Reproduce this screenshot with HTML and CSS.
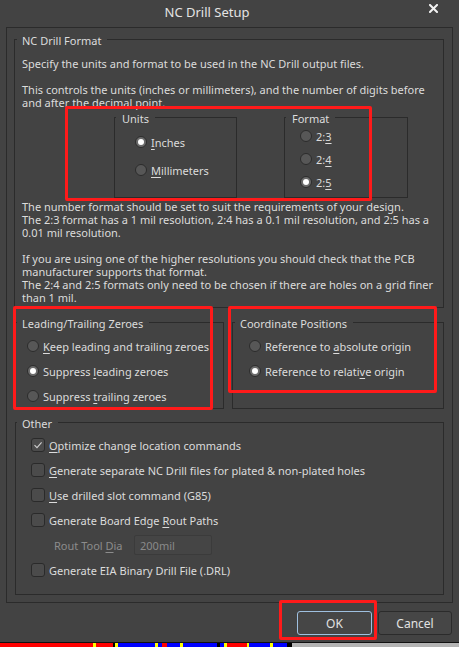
FILE: index.html
```html
<!DOCTYPE html>
<html lang="en">
<head>
<meta charset="utf-8">
<title>NC Drill Setup</title>
<link rel="stylesheet" href="styles.css">
</head>
<body>
<div class="dialog">
  <div class="titlebar">
    <span class="title">NC Drill Setup</span>
    <span class="close"><svg width="9" height="9" viewBox="0 0 9 9"><path d="M1 1L8 8M8 1L1 8" stroke="#f2f2f2" stroke-width="2" stroke-linecap="square"/></svg></span>
  </div>

  <div class="outer">
    <fieldset class="group nc">
      <legend>NC Drill Format</legend>
      <p class="txt first">Specify the units and format to be used in the NC Drill output files.</p>
      <p class="txt gap">This controls the units (inches or millimeters), and the number of digits before<br>and after the decimal point.</p>
      <div class="uf-row">
        <fieldset class="group sub units">
          <legend>Units</legend>
          <div class="opts units-opts">
            <label class="opt"><span class="radio on"></span><span><u>I</u>nches</span></label>
            <label class="opt"><span class="radio"></span><span><u>M</u>illimeters</span></label>
          </div>
        </fieldset>
        <fieldset class="group sub format">
          <legend>Format</legend>
          <div class="opts format-opts">
            <label class="opt"><span class="radio"></span><span>2:<u>3</u></span></label>
            <label class="opt"><span class="radio"></span><span>2:<u>4</u></span></label>
            <label class="opt"><span class="radio on"></span><span>2:<u>5</u></span></label>
          </div>
        </fieldset>
      </div>
      <p class="txt after">The number format should be set to suit the requirements of your design.<br>The 2:3 format has a 1 mil resolution, 2:4 has a 0.1 mil resolution, and 2:5 has a<br>0.01 mil resolution.</p>
      <p class="txt gap last">If you are using one of the higher resolutions you should check that the PCB<br>manufacturer supports that format.<br>The 2:4 and 2:5 formats only need to be chosen if there are holes on a grid finer<br>than 1 mil.</p>
    </fieldset>

    <div class="pair">
      <fieldset class="group zeroes">
        <legend>Leading/Trailing Zeroes</legend>
        <div class="opts z-opts">
          <label class="opt"><span class="radio"></span><span><u>K</u>eep leading and trailing zeroes</span></label>
          <label class="opt"><span class="radio on"></span><span>Suppress <u>l</u>eading zeroes</span></label>
          <label class="opt"><span class="radio"></span><span>Suppress <u>t</u>railing zeroes</span></label>
        </div>
      </fieldset>
      <fieldset class="group coords">
        <legend>Coordinate Positions</legend>
        <div class="opts c-opts">
          <label class="opt"><span class="radio"></span><span>Reference to <u>a</u>bsolute origin</span></label>
          <label class="opt"><span class="radio on"></span><span>Reference to relati<u>v</u>e origin</span></label>
        </div>
      </fieldset>
    </div>

    <fieldset class="group other">
      <legend>Other</legend>
      <div class="opts o-opts">
        <label class="opt"><span class="check on"><svg width="12" height="12" viewBox="0 0 12 12"><path d="M2.5 6.2L5 8.6L9.6 3.4" fill="none" stroke="#cfcfcf" stroke-width="1.1"/></svg></span><span><u>O</u>ptimize change location commands</span></label>
        <label class="opt"><span class="check"></span><span><u>G</u>enerate separate NC Drill files for plated &amp; non-plated holes</span></label>
        <label class="opt"><span class="check"></span><span><u>U</u>se drilled slot command (G85)</span></label>
        <label class="opt"><span class="check"></span><span>Generate Board Edge <u>R</u>out Paths</span></label>
        <div class="opt rout"><span class="rout-label">Rout Tool <u>D</u>ia</span><span class="input">200mil</span></div>
        <label class="opt"><span class="check"></span><span>Generate EIA Binary Drill File (.DRL)</span></label>
      </div>
    </fieldset>
  </div>

  <div class="buttons">
    <button class="btn default">OK</button>
    <button class="btn">Cancel</button>
  </div>
</div>

<div class="strip">
  <span class="s r" style="width:93px"></span>
  <span class="s y" style="width:3px"></span>
  <span class="s r" style="width:17px"></span>
  <span class="s k" style="width:2px"></span>
  <span class="s y" style="width:3px"></span>
  <span class="s b" style="width:37px"></span>
  <span class="s y" style="width:3px"></span>
  <span class="s b" style="width:4px"></span>
  <span class="s r" style="width:5px"></span>
  <span class="s b" style="width:13px"></span>
  <span class="s y" style="width:3px"></span>
  <span class="s b" style="width:34px"></span>
  <span class="s k" style="width:3px"></span>
  <span class="s b" style="width:4px"></span>
  <span class="s y" style="width:3px"></span>
  <span class="s r" style="width:20px"></span>
  <span class="s y" style="width:2px"></span>
  <span class="s b" style="width:21px"></span>
  <span class="s y" style="width:3px"></span>
  <span class="s b" style="width:14px"></span>
  <span class="s k" style="width:5px"></span>
  <span class="s g" style="width:167px"></span>
</div>

<div class="mark m1"></div>
<div class="mark m2"></div>
<div class="mark m3"></div>
<div class="mark m4"></div>
</body>
</html>
```
FILE: styles.css
```css
* { box-sizing: border-box; }

html, body {
  margin: 0;
  padding: 0;
}

body {
  width: 459px;
  height: 647px;
  overflow: hidden;
  position: relative;
  background: #434343;
  color: #dcdcdc;
  font-family: "Noto Sans", "DejaVu Sans", sans-serif;
  font-size: 11px;
  line-height: 13px;
}

.dialog {
  height: 642px;
  display: flex;
  flex-direction: column;
}

/* title bar */
.titlebar {
  height: 27px;
  display: flex;
  align-items: flex-start;
}
.title {
  flex: 1;
  text-align: center;
  padding-top: 3px;
  font-size: 13px;
  line-height: 18px;
  color: #e4e4e4;
}
.close {
  width: 45px;
  padding: 4px 6px 0 0;
  display: flex;
  justify-content: center;
}
.close svg { display: block; }

/* group boxes */
.outer {
  margin: 0 6px 0 6px;
  border: 1px solid #2b2b2b;
  padding: 3px 8px 7px 7px;
}

.group {
  margin: 0;
  border: 1px solid #2b2b2b;
  padding: 0;
  min-width: 0;
}
.group > legend {
  margin-left: 1px;
  padding: 3px 6px 0 5px;
  line-height: 14px;
  color: #dcdcdc;
}

.nc {
  padding: 0 7px 3px 7px;
}
.nc > legend {
  margin-left: -5px;
}

.txt {
  margin: 0;
  white-space: nowrap;
}
.txt.first { margin-top: 9px; }
.txt.gap { margin-top: 13px; }
.txt.after { margin-top: 2px; }

.uf-row {
  display: flex;
  gap: 47px;
  margin-left: 92px;
  height: 89px;
}
.sub > legend {
  margin-left: 1px;
  padding: 3px 6px 0 6px;
}
.units { width: 123px; }
.format { width: 124px; }

.opts {
  display: flex;
  flex-direction: column;
}
.opt {
  display: flex;
  align-items: center;
  gap: 4px;
  height: 20px;
  white-space: nowrap;
}

.units-opts { padding: 6px 0 0 20px; gap: 8px; }
.format-opts { padding: 0 0 0 15px; gap: 3px; }

.pair {
  display: flex;
  gap: 8px;
  margin: 6px 0 0 1px;
  height: 95px;
}
.zeroes { width: 209px; }
.coords { width: 212px; }
.coords > legend { margin-left: 2px; }
.z-opts { padding: 5px 0 0 11px; gap: 5px; }
.c-opts { padding: 5px 0 0 16px; gap: 5px; }

.other {
  margin: 5px 0 0 1px;
  width: 429px;
  padding-bottom: 14px;
}
.o-opts { padding: 4px 0 0 15px; gap: 5px; }

/* radio */
.radio {
  width: 12px;
  height: 12px;
  border-radius: 50%;
  background: #575757;
  border: 1px solid #2c2c2c;
  flex: none;
  display: flex;
  align-items: center;
  justify-content: center;
}
.radio.on {
  background: #6a6a6a;
}
.radio.on::after {
  content: "";
  width: 6px;
  height: 6px;
  border-radius: 50%;
  background: #ffffff;
}

/* checkbox */
.check {
  width: 14px;
  height: 14px;
  border-radius: 3px;
  background: #4b4b4b;
  border: 1px solid #2a2a2a;
  flex: none;
  display: flex;
  align-items: center;
  justify-content: center;
}
.check svg { display: block; }

u {
  text-decoration: underline;
  text-decoration-thickness: 1px;
  text-underline-offset: 2px;
}

.rout {
  padding-left: 23px;
  gap: 0;
  color: #8c8c8c;
}
.rout-label {
  width: 80px;
}
.input {
  width: 78px;
  height: 20px;
  border: 1px solid #3b3b3b;
  border-radius: 2px;
  background: #454545;
  padding-left: 5px;
  display: flex;
  align-items: center;
  color: #8a8a8a;
}

/* buttons */
.buttons {
  margin-top: 8px;
  padding-right: 7px;
  display: flex;
  justify-content: flex-end;
  gap: 6px;
}
.btn {
  width: 74px;
  height: 24px;
  margin: 0;
  padding: 0;
  font-family: "Noto Sans", "DejaVu Sans", sans-serif;
  font-size: 12px;
  color: #e2e2e2;
  background: #464646;
  border: 1px solid #2b2b2b;
  border-radius: 3px;
}
.btn.default {
  width: 75px;
  border-color: #9fc0e0;
}

/* bottom strip */
.strip {
  height: 5px;
  border-top: 1px solid #111;
  display: flex;
}
.s { display: block; height: 100%; }
.s.r { background: #ff0000; }
.s.y { background: #ffff00; }
.s.b { background: #0000ff; }
.s.k { background: #000000; }
.s.g { background: #b4b4b4; }

/* red annotation boxes */
.mark {
  position: absolute;
  border: 3px solid #ff1a1a;
  border-radius: 2px;
}
.m1 { left: 65px; top: 106px; width: 307px; height: 95px; }
.m2 { left: 13px; top: 306px; width: 200px; height: 104px; }
.m3 { left: 228px; top: 306px; width: 209px; height: 87px; }
.m4 { left: 279px; top: 600px; width: 98px; height: 40px; }
```
